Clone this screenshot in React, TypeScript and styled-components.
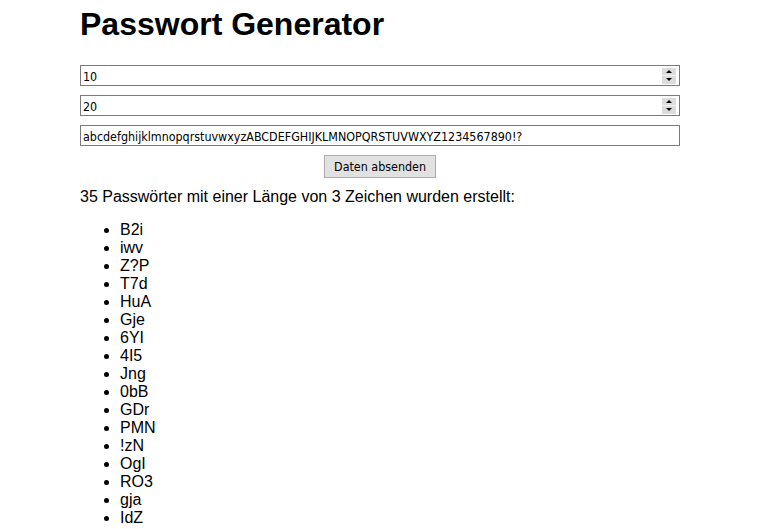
import React from "react";
import styled, { createGlobalStyle } from "styled-components";

const Global = createGlobalStyle`
  html, body { margin: 0; padding: 0; background: #fff; }
  body { font-family: "Liberation Sans", Arial, sans-serif; color: #000; }
`;

const Page = styled.main`
  width: 600px;
  padding: 6px 0 0 80px;
`;

const Title = styled.h1`
  margin: 0 0 22px;
  font-size: 32px;
  font-weight: bold;
  line-height: 37px;
`;

const Form = styled.form`
  display: flex;
  flex-direction: column;
  gap: 9px;
`;

const Field = styled.div`
  display: flex;
  align-items: center;
  height: 21px;
  box-sizing: border-box;
  border: 1px solid #7a7a7a;
  background: #fff;
`;

const Input = styled.input`
  flex: 1;
  min-width: 0;
  height: 19px;
  border: none;
  outline: none;
  padding: 1px 2px 0;
  margin: 0;
  background: transparent;
  font-family: "DejaVu Sans Condensed", "DejaVu Sans", Tahoma, sans-serif;
  font-size: 12.4px;
  color: #000;
`;

const Spinner = styled.div`
  display: flex;
  flex-direction: column;
  width: 14px;
  height: 16px;
  margin-right: 3px;
  gap: 1px;
  background: #f4f4f4;
`;

const SpinBtn = styled.div`
  flex: 1;
  display: flex;
  align-items: center;
  justify-content: center;
  background: #dcdcdc;
`;

const Arrow = styled.span<{ $up?: boolean }>`
  width: 0;
  height: 0;
  border-left: 3px solid transparent;
  border-right: 3px solid transparent;
  ${(p) => (p.$up ? "border-bottom: 3px solid #000;" : "border-top: 3px solid #000;")}
`;

const Actions = styled.div`
  display: flex;
  justify-content: center;
`;

const Button = styled.button`
  height: 23px;
  width: 112px;
  padding: 0;
  margin: 0;
  border: 1px solid #adadad;
  background: #e1e1e1;
  font-family: "DejaVu Sans Condensed", "DejaVu Sans", Tahoma, sans-serif;
  font-size: 12.4px;
  color: #000;
`;

const Summary = styled.p`
  margin: 10px 0 15px;
  font-size: 16px;
  line-height: 18px;
`;

const List = styled.ul`
  margin: 0;
  padding-left: 40px;
  font-size: 16px;
  line-height: 18px;
`;

const NumberField = ({ value }: { value: string }) => (
  <Field>
    <Input type="text" defaultValue={value} />
    <Spinner>
      <SpinBtn>
        <Arrow $up />
      </SpinBtn>
      <SpinBtn>
        <Arrow />
      </SpinBtn>
    </Spinner>
  </Field>
);

const passwords = [
  "B2i", "iwv", "Z?P", "T7d", "HuA", "Gje", "6YI", "4I5", "Jng",
  "0bB", "GDr", "PMN", "!zN", "OgI", "RO3", "gja", "IdZ",
];

export default function App() {
  return (
    <Page>
      <Global />
      <Title>Passwort Generator</Title>
      <Form onSubmit={(e) => e.preventDefault()}>
        <NumberField value="10" />
        <NumberField value="20" />
        <Field>
          <Input
            type="text"
            defaultValue="abcdefghijklmnopqrstuvwxyzABCDEFGHIJKLMNOPQRSTUVWXYZ1234567890!?"
          />
        </Field>
        <Actions>
          <Button type="submit">Daten absenden</Button>
        </Actions>
      </Form>
      <Summary>35 Passwörter mit einer Länge von 3 Zeichen wurden erstellt:</Summary>
      <List>
        {passwords.map((p) => (
          <li key={p}>{p}</li>
        ))}
      </List>
    </Page>
  );
}
